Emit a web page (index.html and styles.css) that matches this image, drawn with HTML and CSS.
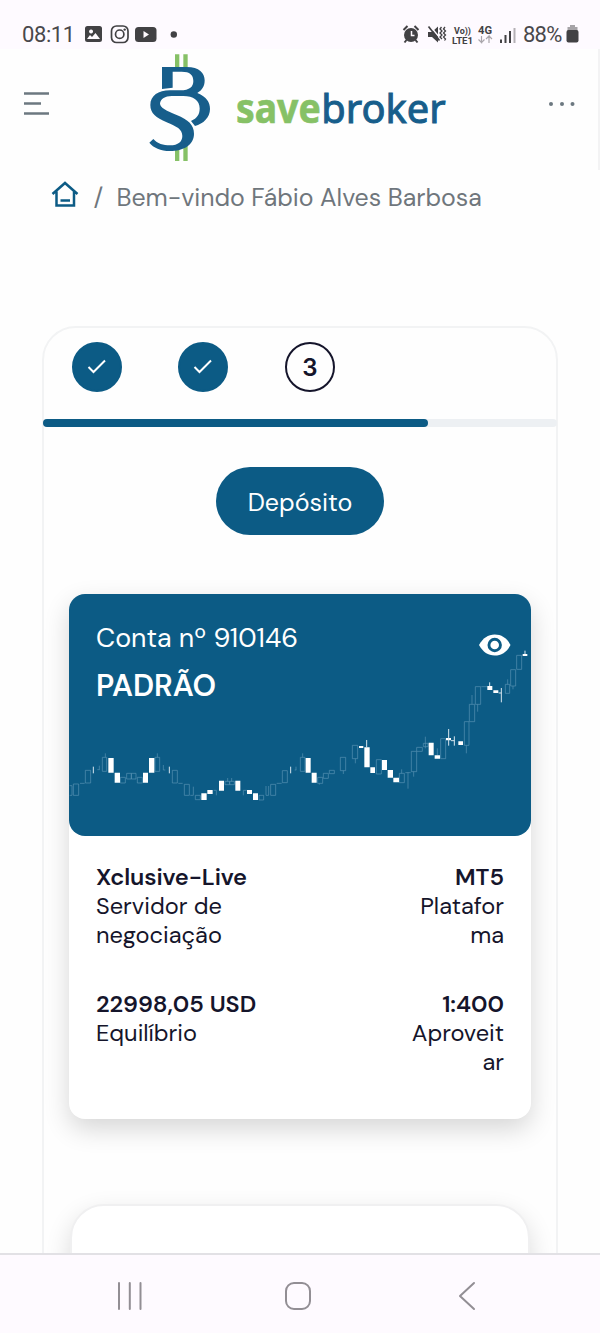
FILE: index.html
```
<!DOCTYPE html>
<html lang="pt">
<head>
<meta charset="utf-8">
<title>savebroker</title>
<link rel="stylesheet" href="styles.css">
</head>
<body>
<div class="screen">
  <div class="status">
    <span class="time">08:11</span>
    <svg class="status-left" width="100" height="24" viewBox="0 0 100 24" fill="#424144">
      <path fill-rule="evenodd" d="M3.500 4h12a2.500 2.500 0 0 1 2.500 2.500v11a2.500 2.500 0 0 1-2.500 2.500h-12a2.500 2.500 0 0 1-2.500-2.500v-11a2.500 2.500 0 0 1 2.500-2.500zM3 17h13l-4.500-6-3.500 4-2-2zM7 7.500a2 2 0 1 0 .1 0z"/>
      <g fill="none" stroke="#424144" stroke-width="1.700"><rect x="27.500" y="4" width="16.500" height="16.500" rx="5"/><circle cx="35.700" cy="12.200" r="4.200"/></g>
      <circle cx="40.700" cy="7.600" r="1.200"/>
      <rect x="51" y="5" width="21.500" height="15" rx="3.500"/><path fill="#fffaff" d="M59.500 9l5.500 3.500-5.500 3.500z"/>
      <circle cx="89.800" cy="12.500" r="3.200"/>
    </svg>
    <svg class="status-right" width="116" height="24" viewBox="0 0 116 24" fill="#424144">
      <circle cx="9" cy="13" r="7"/><path d="M1.500 8l4-4M16.500 8l-4-4M4.500 18l-2 2.500M13.500 18l2 2.500" stroke="#424144" stroke-width="2"/><path d="M9.500 9v4.500h3" fill="none" stroke="#fffaff" stroke-width="1.500"/>
      <path d="M26 10h4l6-5.500v16l-6-5.500h-4z"/><path d="M27.500 3.500l11 13" stroke="#fffaff" stroke-width="1.500"/><path d="M26.500 4.500l11 14" stroke="#424144" stroke-width="1.700"/><path d="M39.500 5l-1.500 2 2 2-2 2 2 2-2 2 2 2M43 5l-1.500 2 2 2-2 2 2 2-2 2 2 2-1 1.500" fill="none" stroke="#424144" stroke-width="1.300"/>
      <g class="micro"><text x="52" y="12" textLength="17" lengthAdjust="spacingAndGlyphs">Vo))</text><text x="50" y="21.500" textLength="21" lengthAdjust="spacingAndGlyphs">LTE1</text><text x="76" y="12" class="micro-4g" textLength="14" lengthAdjust="spacingAndGlyphs">4G</text></g>
      <path d="M79.500 14v6.500l-3-3M79.500 20.500l3-3M87 21v-7l-3 3M87 14l3 3" fill="none" stroke="#aaa6ab" stroke-width="1.200"/>
      <g stroke-width="2"><path stroke="#424144" d="M99 17.500v3.500M103.500 13v8M108 9v12"/><path stroke="#b4b0b5" d="M112.500 6v15"/></g>
    </svg>
    <span class="battery-text">88%</span>
    <svg class="battery" width="13" height="18" viewBox="0 0 13 18"><path fill="#a6a3a7" d="M4 0h5v2h2.500v4h-10v-4h2.500z"/><rect y="5" x=".5" width="12" height="12.500" rx="2" fill="#424144"/></svg>
  </div>

  <header class="header">
    <svg class="menu" width="27" height="26" viewBox="0 0 27 26" stroke="#6c7880" stroke-width="2.400"><path d="M1 2.500h25M1 12.500h17M1 22.500h25"/></svg>
    <svg class="logo" width="320" height="121" viewBox="0 12 960 363">
      <path fill="#86c166" d="M105 28h13v40h-13zM130 28h13v40h-13zM105 302h13v46h-13zM130 302h13v46h-13z"/>
      <path fill="#175e8b" d="M66 66H140C178 66 194 85 194 106C194 124 186 136 172 144C200 156 210 172 210 192C210 218 190 236 165 243L153 228C172 220 179 208 179 190C179 166 160 153 130 153H95C75 153 62 162 60 175C60 190 80 197 110 210C145 224 162 240 162 266C162 300 130 318 90 318C62 318 40 308 28 293L40 282C52 296 70 301 90 301C115 301 127 290 127 273C127 252 110 245 80 232C48 218 31 205 31 180C31 152 55 136 90 136H120C150 136 160 125 160 108C160 90 150 80 125 80H98V128L66 132Z"/>
      <text class="word-save" x="288" y="234" textLength="254" lengthAdjust="spacingAndGlyphs">save</text>
      <text class="word-broker" x="544" y="234" textLength="373" lengthAdjust="spacingAndGlyphs">broker</text>
    </svg>
    <svg class="more" width="28" height="6" viewBox="0 0 28 6" fill="#6c7880"><circle cx="3" cy="3" r="2"/><circle cx="14" cy="3" r="2"/><circle cx="24.500" cy="3" r="2"/></svg>
  </header>

  <nav class="crumbs">
    <svg width="28" height="26" viewBox="0 0 28 26" fill="none" stroke="#0c5b85" stroke-width="2.500"><path d="M1.500 13L14 2l12.500 11M5.500 10.500V24.500h17.500V10.500M9.500 19.500h9.500"/></svg>
    <span class="slash">/</span>
    <span class="crumb">Bem-vindo Fábio Alves Barbosa</span>
  </nav>

  <main class="panel">
    <div class="steps">
      <span class="step done"><svg width="20" height="16" viewBox="0 0 20 16"><path d="M1.500 8l5 5L18 1.500"/></svg></span>
      <span class="step done"><svg width="20" height="16" viewBox="0 0 20 16"><path d="M1.500 8l5 5L18 1.500"/></svg></span>
      <span class="step">3</span>
    </div>
    <div class="progress"><div class="bar"></div></div>
    <button class="deposit"><span>Depósito</span></button>

    <section class="account">
      <div class="hero">
        <svg class="chart" width="462" height="242" viewBox="69 594 462 242">
          <g transform="translate(60 730) scale(.33333)">
            <path class="hollow" d="M29 167h7v29h-7M40 162h16v34h-16zM60 160h14M76 121h16v38h-16zM112 119h7M118 107v12M127 82h13v42h-13zM136 70v12M181 142h15v17h-15zM200 130h14v17h-14zM214 130h14v17h-14zM232 142h15v17h-15zM285 82h14v42h-14zM292 70v12M310 105v15h6M337 121h15v38h-15zM355 160h13M373 163h15v33h-15zM391 196h9v-26M406 196h15v13h-15z"/>
            <path class="solid" d="M145 84h16v44h-16zM164 128h16v30h-16zM249 128h15v30h-15zM267 84h16v44h-16z"/>
            <path class="wick" d="M100 110v20M328 110v20"/>
          </g>
          <g transform="translate(180 740) scale(.33333)">
            <path class="hollow" d="M101 151h8v15M135 124h14v10h-14zM149 124h14v10h-14zM143 114v10M155 114v10M190 166v-15h10M237 166h14v14h-14zM258 138v28h8v-28M272 133h15v33h-15zM290 130h15M307 92h15v36h-15zM344 90h5M348 80v10M361 52h14v42h-14zM368 40v12M413 112h15v18h-15zM418 134v-4M430 100h15v15h-15zM448 91h15v10h-15zM481 52h16v40h-16zM490 92v10"/>
            <path class="solid" d="M64 160h16v20h-16zM82 150h16v12h-16zM117 122h15v30h-15zM166 122h15v30h-15zM201 150h15v12h-15zM219 160h15v20h-15zM377 54h15v44h-15zM395 98h15v30h-15z"/>
            <path class="wick" d="M332 80v20"/>
          </g>
          <g transform="translate(340 640) scale(.33333)">
            <path class="hollow" d="M37 316h16v40h-16zM46 356v14M109 359h15v43h-15zM178 400h15v28h-15zM185 388v12M196 398h16M204 397v49M214 334h16v61h-16zM221 395v15M230 322h17v12h-17zM250 310h14v10h-14zM256 290v35M292 325v21M302 296h15v60h-15zM373 245h14v71h-14zM379 316v24M388 193h16v52h-16zM396 165v28M406 140h16v53h-16zM413 193v22M424 140h18M496 133h13v27h-13zM503 118v15M512 89h15v49h-15zM519 138v10M530 46h15v42h-15z"/>
            <path class="solid" d="M57 318h13v6h-13zM73 322h16v60h-16zM91 382h14v17h-14zM126 360h15v30h-15zM143 390h16v23h-16zM160 413h17v14h-17zM266 308h15v38h-15zM284 346h16v10h-16zM318 294h15v7h-15zM355 304h14v11h-14zM442 138h15v12h-15zM460 151h15v8h-15zM548 42h14v6h-14z"/>
            <path class="wick" d="M80 300v22M326 267v50M333 302h10M343 289v28M449 127v11M484 144v43M476 159h8M555 32v10"/>
          </g>
        </svg>
        <div class="hero-text">
          <div class="acct">Conta nº 910146</div>
          <div class="type">PADRÃO</div>
        </div>
        <svg class="eye" width="32" height="22" viewBox="0 0 32 22"><path fill="#fff" d="M0 11C4 4 9 .5 15.700 .5S28 4 31.500 11C28 18 22.500 21.500 15.700 21.500S4 18 0 11z"/><circle cx="15.700" cy="11" r="7.200" fill="#0c5b85"/><circle cx="15.700" cy="11" r="4.300" fill="#fff"/></svg>
      </div>
      <div class="facts">
        <div class="row">
          <div><b class="server">Xclusive-Live</b><span>Servidor de<br>negociação</span></div>
          <div class="right"><b>MT5</b><span>Platafor<br>ma</span></div>
        </div>
        <div class="row">
          <div><b>22998,05 USD</b><span>Equilíbrio</span></div>
          <div class="right"><b>1:400</b><span>Aproveit<br>ar</span></div>
        </div>
      </div>
    </section>
    <section class="next"></section>
  </main>

  <footer class="navbar">
    <svg width="26" height="30" viewBox="0 0 26 30"><path d="M2 2v26M12.800 2v26M23.500 2v26"/></svg>
    <svg width="28" height="30" viewBox="0 0 28 30"><rect x="2" y="2" width="24" height="26" rx="8"/></svg>
    <svg width="18" height="30" viewBox="0 0 18 30"><path d="M16 2L2 15l14 13"/></svg>
  </footer>
</div>
</body>
</html>
```

FILE: styles.css
```
* { box-sizing: border-box; }
body { margin: 0; background: #fff; font-family: "DM Sans", Lato, sans-serif; color: #15152b; }
.screen { width: 600px; height: 1333px; overflow: hidden; display: flex; flex-direction: column; background: #fefefe; }
svg { display: block; flex: none; }

.status { height: 49px; flex: none; background: #fefaff; display: flex; align-items: center; padding: 20px 20px 0 22px; font: 22px/28px Roboto, sans-serif; color: #49484b; }
.time { width: 62px; letter-spacing: -.4px; }
.status-left { margin-top: -2px; }
.status-right { margin: -2px 0 0 218px; }
.micro { font: 700 9.500px Roboto, sans-serif; }
.micro-4g { font-size: 11px; }
.battery-text { width: 42px; margin-left: 5px; letter-spacing: -.8px; white-space: nowrap; }
.battery { margin: -1px 0 0 1px; }

.header { height: 121px; flex: none; display: flex; align-items: center; padding: 0 24px 0 23px; border-right: 2px solid #f3f3f4; }
.menu { margin-top: -12px; }
.logo { margin-left: 90px; }
.more { margin: -12px 0 0 88px; }
.word-save { font: 700 122px "Noto Sans", sans-serif; fill: #86c166; stroke: #86c166; stroke-width: 2px; }
.word-broker { font: 400 122px "Noto Sans", sans-serif; fill: #175e8b; stroke: #175e8b; stroke-width: 3px; }

.crumbs { height: 54px; flex: none; display: flex; align-items: center; padding-left: 51px; color: #6f767c; font-size: 24.900px; white-space: nowrap; }
.crumbs svg { margin-top: -6px; }
.crumb { letter-spacing: -.03px; }
.slash { margin-left: 14.500px; width: 23px; }

.panel { width: 516px; height: 1100px; flex: none; margin: 102px 0 0 42px; border: 2px solid #f2f3f4; border-radius: 34px; display: flex; flex-direction: column; align-items: center; background: #fefefe; }
.steps { align-self: flex-start; display: flex; gap: 56.700px; padding: 14px 0 0 27.600px; }
.step { width: 50px; height: 50px; border-radius: 50%; border: 2px solid #15152b; display: grid; place-items: center; font: 600 24px Inter, sans-serif; }
.done { background: #0c5b85; border-color: #0c5b85; }
.done path { fill: none; stroke: #fff; stroke-width: 2; }
.progress { width: 514px; height: 8px; margin-top: 27px; background: #edf0f3; border-radius: 4px; }
.bar { width: 385px; height: 8px; background: #0c5b85; border-radius: 4px; }
.deposit { width: 168px; height: 68px; margin-top: 40px; border: 0; border-radius: 34px; background: #0c5b85; color: #fff; font: 25px "DM Sans", Lato, sans-serif; padding: 3px 0 0; }

.account { width: 462px; height: 525px; margin-top: 59px; background: #fff; border-radius: 16px; box-shadow: 0 10px 26px rgba(0,0,0,.16); flex: none; }
.hero { height: 242px; background: #0c5b85; border-radius: 16px; position: relative; display: flex; justify-content: space-between; padding: 27px 20px 0 27px; color: #fff; }
.chart { position: absolute; inset: 0; }
.hollow { fill: none; stroke: #5b94b3; stroke-width: 2; }
.solid { fill: #fff; }
.wick { fill: none; stroke: #d9e7ef; stroke-width: 3; }
.acct { font-size: 26.800px; line-height: 34px; }
.type { font-size: 30.200px; line-height: 36px; font-weight: 650; margin-top: 13px; }
.eye { margin-top: 13px; }
.facts { padding: 26.500px 27px 0; font-size: 23.600px; line-height: 29.300px; }
.row { display: flex; justify-content: space-between; height: 127px; white-space: nowrap; }
.row b, .row span { display: block; }
.row b { font-weight: 650; }
.row .server { letter-spacing: -.15px; }
.right { text-align: right; }
.next { width: 460px; height: 200px; flex: none; margin-top: 85px; background: #fff; border: 2px solid #f0f0f1; border-radius: 34px; box-shadow: 0 10px 26px rgba(0,0,0,.14); }

.navbar { height: 80px; flex: none; margin-top: -173px; position: relative; background: #fefaff; border-top: 2px solid #e2e1e5; display: flex; align-items: center; padding: 4px 0 0 117px; }
.navbar svg { fill: none; stroke: #928e94; stroke-width: 2; stroke-linecap: round; stroke-linejoin: round; }
.navbar svg + svg { margin-left: 141px; }
.navbar svg:last-child { margin-left: 146px; }
```
